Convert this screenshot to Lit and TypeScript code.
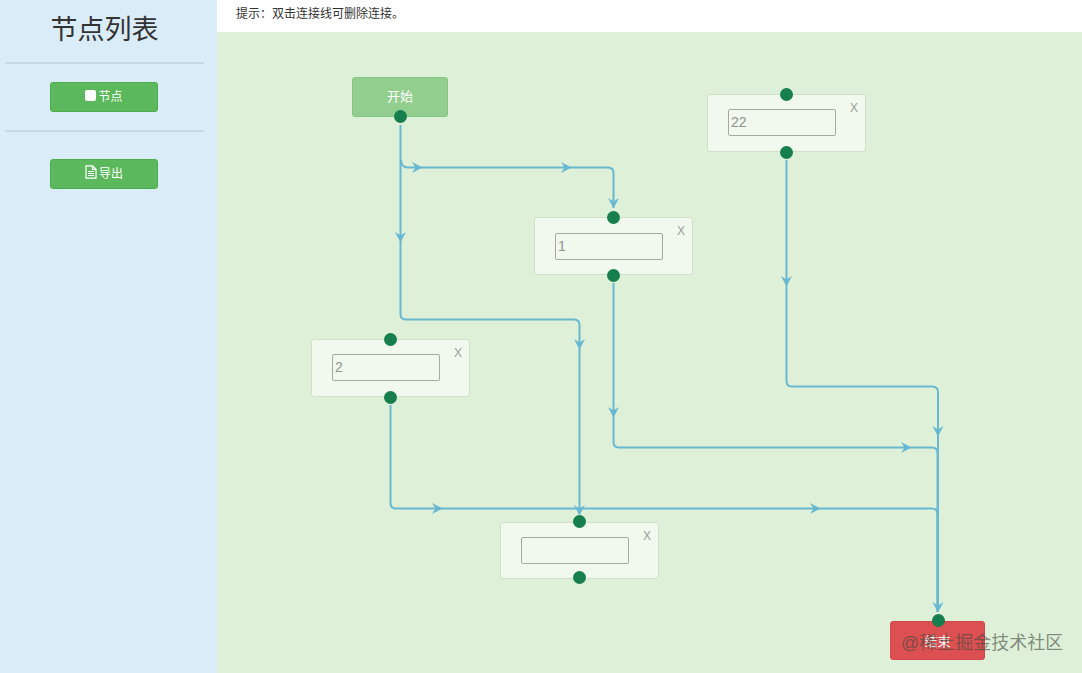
import { LitElement, html, css, svg } from "lit";
import { customElement } from "lit/decorators.js";

const nodes = [
  { x: 707, y: 94, h: 58, iy: 15, ih: 27, value: "22", tx: 786, ty: 94, bx: 786, by: 152 },
  { x: 534, y: 217, h: 58, iy: 16, ih: 27, value: "1", tx: 613, ty: 217, bx: 613, by: 275 },
  { x: 311, y: 339, h: 58, iy: 15, ih: 27, value: "2", tx: 390, ty: 339, bx: 390, by: 397 },
  { x: 500, y: 522, h: 57, iy: 15, ih: 27, value: "", tx: 579, ty: 521.5, bx: 579, by: 577.5 },
];

const lines = [
  "M400.5 125V314Q400.5 319.5 406 319.5H574Q579.5 319.5 579.5 325V514",
  "M401 160Q401 167.5 408 167.5H608Q613.5 167.5 613.5 173V208",
  "M786.5 160V381Q786.5 386.5 792 386.5H932Q938 386.5 938 392V612",
  "M613.5 283V442Q613.5 447.5 619 447.5H932Q937.5 447.5 937.5 453V612",
  "M390.5 405V503Q390.5 508.5 396 508.5H932Q937.5 508.5 937.5 514V612",
];

const arrows: [number, number, number][] = [
  [400.5, 237, 90],
  [579.5, 344, 90],
  [579.5, 510, 90],
  [613.5, 203, 90],
  [613.5, 412, 90],
  [786.5, 281, 90],
  [938, 431, 90],
  [938, 607, 90],
  [417, 167.5, 0],
  [566, 167.5, 0],
  [906, 447.5, 0],
  [437, 508.5, 0],
  [815, 508.5, 0],
];

@customElement("app-root")
export class AppRoot extends LitElement {
  static styles = css`
    :host {
      display: block;
      width: 1082px;
      height: 673px;
      overflow: hidden;
      font-family: "Liberation Sans", "Noto Sans CJK SC", sans-serif;
    }
    * { box-sizing: border-box; }
    .page { display: flex; width: 100%; height: 100%; }
    .side {
      width: 217px;
      flex: none;
      background: #daecf7;
      display: flex;
      flex-direction: column;
      align-items: flex-start;
      padding: 0 13px 0 5px;
    }
    .title {
      margin: 0;
      width: 100%;
      text-align: center;
      height: 62px;
      padding-top: 11px;
      font-size: 27px;
      line-height: 38px;
      font-weight: 400;
      color: #333;
    }
    .rule { width: 100%; height: 2px; flex: none; background: #c8d8e4; }
    .btn {
      width: 108px;
      height: 30px;
      flex: none;
      margin-left: 45px;
      border: 1px solid #4cae4c;
      border-radius: 3px;
      background: #5cb85c;
      color: #fff;
      font-size: 12px;
      display: flex;
      align-items: center;
      justify-content: center;
      gap: 2px;
      padding: 0 0 4px;
      font-family: inherit;
    }
    .btn.first { margin-top: 18px; margin-bottom: 18px; }
    .btn.second { margin-top: 27px; }
    .sq { width: 11px; height: 11px; background: #fff; border-radius: 2px; display: block; }
    .doc { width: 12px; height: 14px; display: block; }
    .main { flex: 1; display: flex; flex-direction: column; min-width: 0; }
    .hint {
      height: 32px;
      flex: none;
      background: #fff;
      color: #333;
      font-size: 12px;
      line-height: 14px;
      padding: 7px 0 0 19px;
    }
    .canvas { flex: 1; background: #dff0d8; }
    .layer { position: absolute; left: 0; top: 0; width: 1082px; height: 673px; pointer-events: none; }
    .node {
      position: absolute;
      width: 159px;
      background: rgba(255, 255, 255, 0.55);
      border: 1px solid #d2e0c9;
      border-radius: 3px;
    }
    .input {
      position: absolute;
      left: 20px;
      width: 108px;
      border: 1px solid #a5a9a4;
      border-radius: 2px;
      background: transparent;
      color: #8f938e;
      font: 14px/1 "Liberation Sans", "Noto Sans CJK SC", sans-serif;
      padding: 0 2px 2px 2px;
      outline: none;
    }
    .x {
      position: absolute;
      right: 7px;
      top: 6px;
      color: #9a9e99;
      font-size: 12px;
      line-height: 14px;
    }
    .term {
      position: absolute;
      border-radius: 3px;
      color: #fff;
      font-size: 13px;
      display: flex;
      align-items: center;
      justify-content: center;
    }
    .start { left: 352px; top: 77px; width: 96px; height: 40px; background: #92cf8e; border: 1px solid #85c583; padding-bottom: 3px; }
    .end { left: 890px; top: 621px; width: 95px; height: 39px; background: #dc5052; border: 1px solid #d0494b; }
    .dot {
      position: absolute;
      width: 13px;
      height: 13px;
      margin: -6.5px 0 0 -6.5px;
      border-radius: 50%;
      background: #177f4e;
    }
    .mark {
      position: absolute;
      left: 901px;
      top: 631px;
      font-size: 18px;
      line-height: 24px;
      color: rgba(60, 70, 60, 0.6);
      white-space: nowrap;
    }
  `;

  render() {
    return html`
      <div class="page">
        <aside class="side">
          <h1 class="title">节点列表</h1>
          <div class="rule"></div>
          <button class="btn first"><span class="sq"></span>节点</button>
          <div class="rule"></div>
          <button class="btn second">
            <svg class="doc" viewBox="0 0 12 14" fill="none" stroke="#fff" stroke-width="1.2">
              <path d="M1 .8H7.5L11 4.3V13.2H1Z" />
              <path d="M7.5 .8V4.3H11M3 6.5H9M3 8.5H9M3 10.5H9" />
            </svg>导出
          </button>
        </aside>
        <main class="main">
          <div class="hint">提示：双击连接线可删除连接。</div>
          <div class="canvas"></div>
        </main>
      </div>

      ${nodes.map(
        (n) => html`
          <div class="node" style="left:${n.x}px;top:${n.y}px;height:${n.h}px">
            <input class="input" style="top:${n.iy - 1}px;height:${n.ih}px" .value=${n.value} />
            <span class="x">X</span>
          </div>
        `
      )}
      <div class="term start">开始</div>
      <div class="term end">结束</div>

      <svg class="layer" viewBox="0 0 1082 673" fill="none">
        ${lines.map((d) => svg`<path d=${d} stroke="#67b8d0" stroke-width="2" />`)}
        ${arrows.map(
          ([x, y, r]) => svg`<path transform="translate(${x} ${y}) rotate(${r})"
            d="M5.5 0L-5 -5.5L-1.5 0L-5 5.5Z" fill="#67b8d0" />`
        )}
      </svg>

      <span class="dot" style="left:400.5px;top:116px"></span>
      ${nodes.map(
        (n) => html`
          <span class="dot" style="left:${n.tx}px;top:${n.ty}px"></span>
          <span class="dot" style="left:${n.bx}px;top:${n.by}px"></span>
        `
      )}
      <span class="dot" style="left:938px;top:620px"></span>
      <span class="mark">@稀土掘金技术社区</span>
    `;
  }
}
